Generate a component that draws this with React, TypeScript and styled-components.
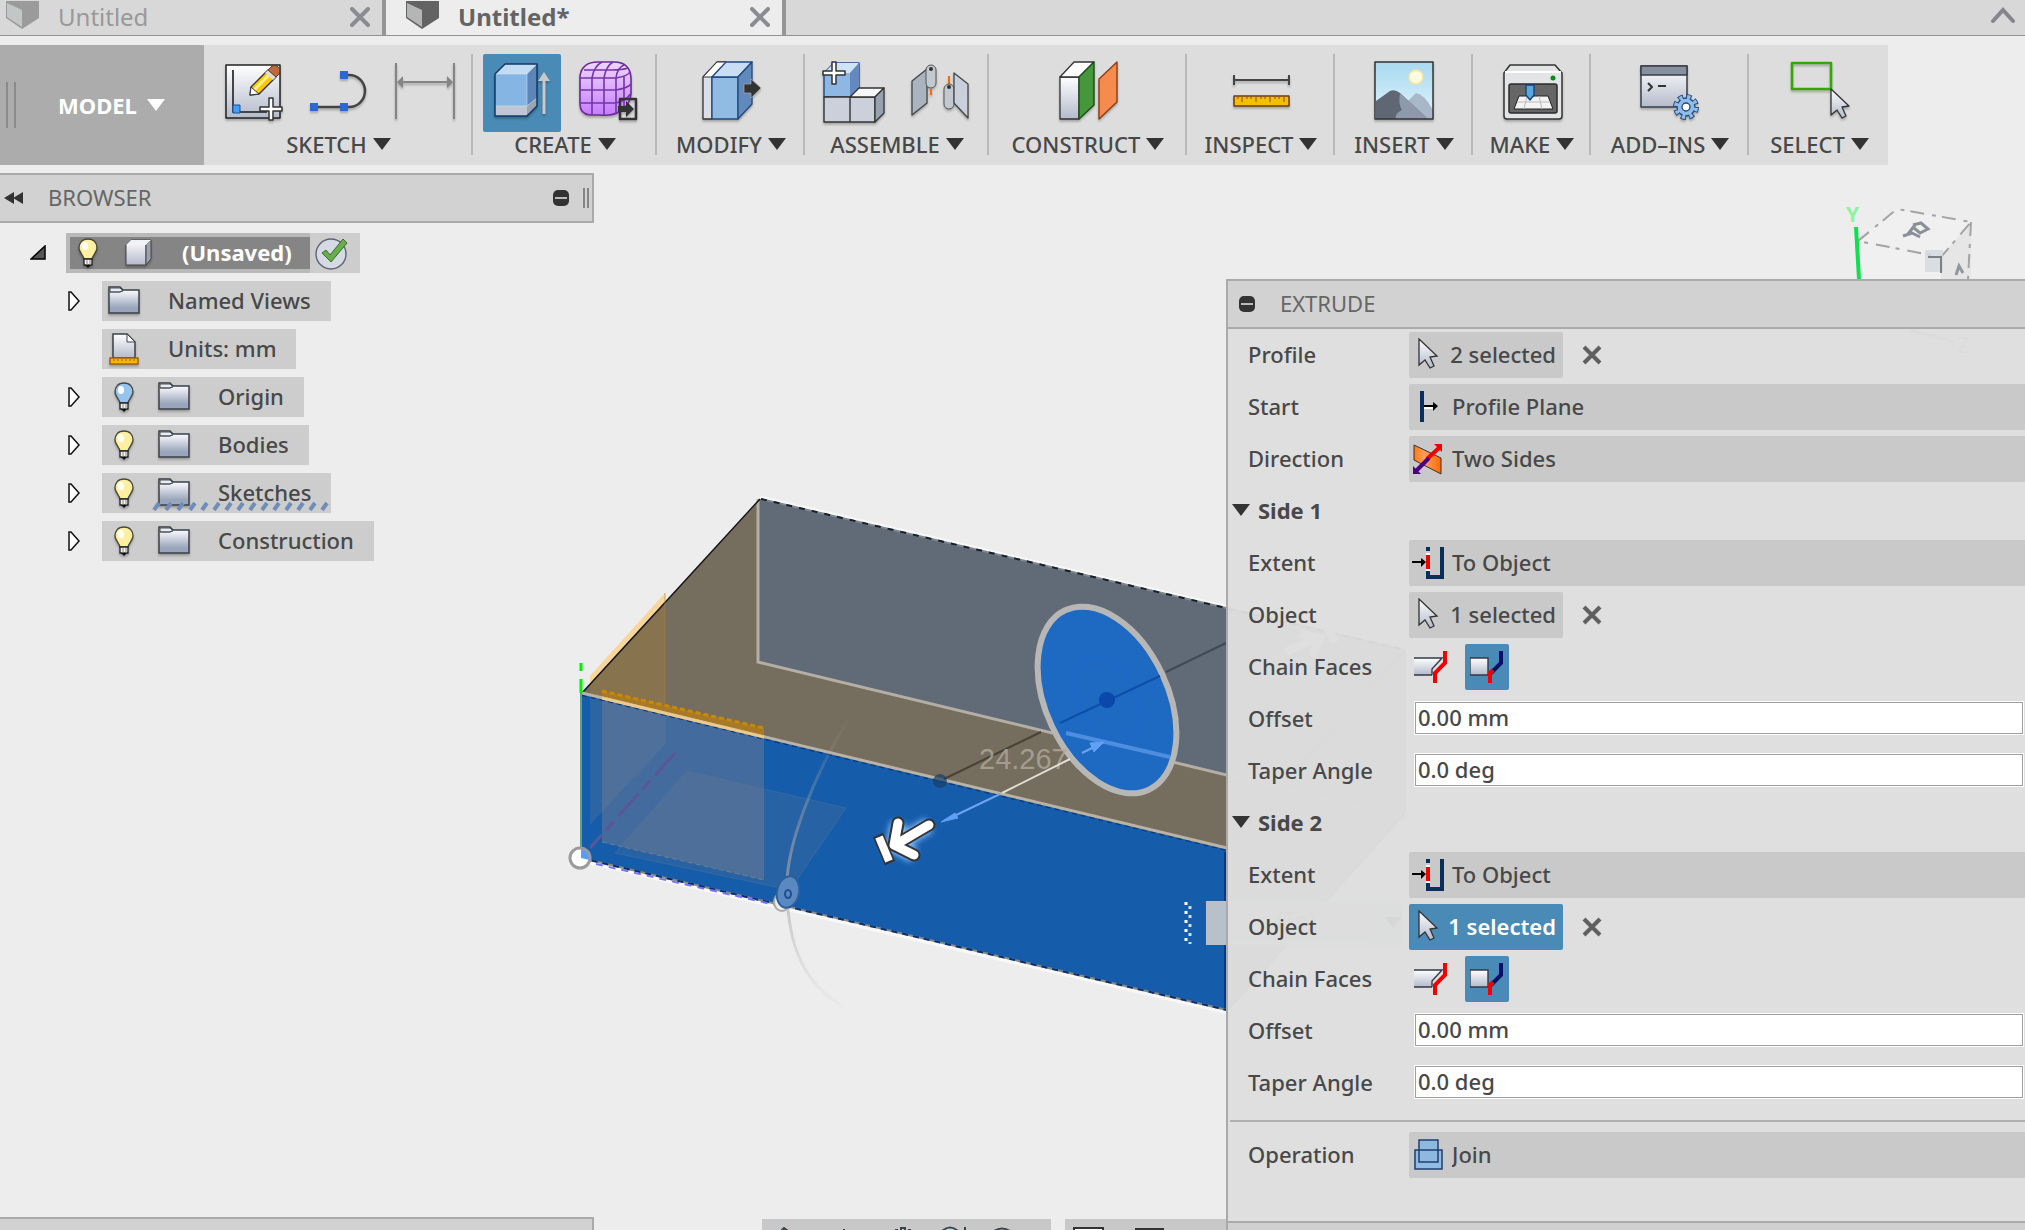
import React, { useState } from "react";
import styled, { createGlobalStyle, css } from "styled-components";

const Global = createGlobalStyle`
  * { box-sizing: border-box; }
  body { margin: 0; background: #ededed; overflow: hidden; }
  button, input, select { font: inherit; color: inherit; margin: 0; padding: 0; border: 0; background: none; border-radius: 0; outline: none; }
`;

const Page = styled.div`
  height: 100vh;
  display: flex;
  flex-direction: column;
  overflow: hidden;
  font-family: "Noto Sans", "Open Sans", sans-serif;
  font-size: 22px;
  font-weight: 500;
  line-height: 30px;
  color: #484848;
`;

/* ---------- document tabs ---------- */

const TabBar = styled.div`
  display: flex;
  height: 36px;
  flex: none;
  background: #d8d8d8;
  border-bottom: 1px solid #929292;
`;

const Tab = styled.div<{ $active?: boolean }>`
  display: flex;
  align-items: center;
  width: ${(p) => (p.$active ? 400 : 386)}px;
  padding: 0 12px 2px ${(p) => (p.$active ? 20 : 6)}px;
  border-right: 4px solid #959595;
  font-size: 24px;
  color: ${(p) => (p.$active ? "#646464" : "#999")};
  font-weight: ${(p) => (p.$active ? 700 : 400)};
  background: ${(p) => (p.$active ? "#ededed" : "transparent")};
`;

const TabName = styled.button`
  display: flex;
  align-items: center;
  flex: 1;
  gap: 18px;
  height: 32px;
  svg { align-self: flex-start; }
`;

const IconButton = styled.button`
  display: flex;
  align-items: center;
  justify-content: center;
`;

const CollapseTabs = styled(IconButton)`
  margin-left: auto;
  padding: 0 9px 4px 0;
`;

/* ---------- workspace ---------- */

const Workspace = styled.main`
  position: relative;
  flex: 1;
  min-height: 0;
  display: flex;
  flex-direction: column;
  gap: 8px;
  padding-top: 9px;
`;

const Canvas = styled.svg`
  position: absolute;
  left: 0;
  top: 0;
`;

const Toolbar = styled.div`
  position: relative;
  display: flex;
  align-self: flex-start;
  height: 120px;
  background: #dddddd;
`;

const ModelButton = styled.button`
  display: flex;
  align-items: center;
  width: 204px;
  padding-left: 6px;
  background: #acacac;
  color: #fff;
  font-weight: 700;
  gap: 10px;
`;

const Grip = styled.span`
  width: 10px;
  height: 46px;
  border: solid #8a8a8a;
  border-width: 0 2px;
  margin-right: 32px;
`;

const Group = styled.div<{ $width: number }>`
  display: flex;
  flex-direction: column;
  align-items: center;
  width: ${(p) => p.$width}px;
  margin: 9px 0 10px;
  padding-left: 2px;
  border-right: 2px solid #b9b9b9;
  &:last-child { border-right: 0; }
`;

const Tools = styled.div`
  display: flex;
  gap: 8px;
`;

const ToolButton = styled.button<{ $active?: boolean }>`
  width: 78px;
  height: 78px;
  border-radius: 2px;
  background: ${(p) => (p.$active ? "#4a8ab6" : "transparent")};
  svg { display: block; filter: drop-shadow(0 2px 1px rgba(0, 0, 0, 0.25)); }
`;

const GroupLabel = styled.button`
  display: flex;
  align-items: center;
  gap: 6px;
  height: 24px;
  line-height: 24px;
`;

const Caret = styled.span`
  border: solid transparent;
  border-width: 12px 9px 0;
  border-top-color: currentColor;
`;

const DarkCaret = styled(Caret)`
  border-top-color: #333;
`;

const Body = styled.div`
  position: relative;
  flex: 1;
  min-height: 0;
  display: flex;
`;

/* ---------- browser ---------- */

const BrowserColumn = styled.section`
  display: flex;
  flex-direction: column;
  width: 594px;
`;

const panelBar = css`
  display: flex;
  align-items: center;
  background: #d2d2d2;
  border: solid #aaaaaa;
  color: #666;
`;

const PanelTitle = styled.h2`
  flex: 1;
  margin: 0;
  padding-bottom: 2px;
  font-size: 22px;
  font-weight: 400;
`;

const BrowserHeader = styled.header`
  ${panelBar}
  height: 50px;
  border-width: 2px 2px 2px 0;
  padding: 0 3px 0 4px;
  gap: 25px;
`;

const BrowserEnd = styled.span`
  display: flex;
  align-items: center;
  gap: 14px;
`;

const Resizer = styled.span`
  width: 6px;
  height: 20px;
  border: solid #858585;
  border-width: 0 2px;
`;

const BrowserFooter = styled.footer`
  ${panelBar}
  height: 13px;
  margin-top: auto;
  border-width: 2px 2px 0 0;
`;

const Tree = styled.ul`
  list-style: none;
  margin: 0;
  padding: 10px 0 0;
  display: flex;
  flex-direction: column;
  gap: 8px;
`;

const TreeRow = styled.li<{ $level: number }>`
  display: flex;
  align-items: center;
  height: 40px;
  padding-left: ${(p) => (p.$level ? 66 : 30)}px;
`;

const Twisty = styled.button`
  width: 36px;
  height: 40px;
  display: flex;
  align-items: center;
`;

const NodeButton = styled.button`
  position: relative;
  display: flex;
  align-items: center;
  height: 40px;
  padding: 0 20px 0 4px;
  background: #cdcdcd;
`;

const RootButton = styled(NodeButton)`
  border: 4px solid #b9b9b9;
  border-right: 0;
  padding: 0 18px 0 0;
  background: #858585;
  color: #fff;
  font-weight: 700;
`;

const RootCheck = styled.span`
  display: flex;
  align-items: center;
  width: 50px;
  height: 40px;
  padding-left: 4px;
  background: #cdcdcd;
`;

const Glyph = styled.span<{ $width: number }>`
  display: flex;
  justify-content: center;
  width: ${(p) => p.$width}px;
  svg { filter: drop-shadow(0 2px 1px rgba(0, 0, 0, 0.25)); }
`;

const NodeName = styled.span<{ $near?: boolean }>`
  padding: 0 0 2px ${(p) => (p.$near ? 12 : 26)}px;
`;

const Hatch = styled.svg`
  position: absolute;
  left: 48px;
  bottom: 2px;
`;

/* ---------- bottom bars ---------- */

const BottomBars = styled.div`
  flex: 1;
  display: flex;
  align-items: flex-end;
  gap: 14px;
  padding-left: 168px;
`;

const BottomBar = styled.div<{ $width?: number }>`
  height: 11px;
  background: #c8c8c8;
  overflow: hidden;
  ${(p) => (p.$width ? `width: ${p.$width}px;` : "flex: 1;")}
  svg { display: block; }
`;

/* ---------- extrude dialog ---------- */

const Dialog = styled.section`
  display: flex;
  flex-direction: column;
  width: 799px;
  margin-top: 106px;
  border-left: 2px solid #aaaaaa;
  background: rgba(222, 222, 222, 0.955);
`;

const DialogHeader = styled.header`
  ${panelBar}
  height: 50px;
  border-width: 2px 0;
  padding-left: 11px;
  gap: 25px;
`;

const DialogFooter = styled.footer`
  height: 9px;
  margin-top: auto;
  background: #d0d0d0;
  border-top: 2px solid #aaaaaa;
`;

const Rows = styled.div`
  display: flex;
  flex-direction: column;
  gap: 6px;
  padding: 3px 0 14px;
`;

const Row = styled.div`
  display: flex;
  align-items: center;
  height: 46px;
  padding-left: 20px;
`;

const Label = styled.label`
  width: 161px;
  padding-bottom: 2px;
  flex: none;
`;

const SectionToggle = styled.button`
  display: flex;
  align-items: center;
  gap: 8px;
  height: 46px;
  padding: 0 0 2px 4px;
  font-weight: 700;
`;

const Chip = styled.button<{ $active?: boolean }>`
  display: flex;
  align-items: center;
  justify-content: space-between;
  width: 154px;
  height: 46px;
  padding: 0 7px 2px 9px;
  border-radius: 2px;
  background: ${(p) => (p.$active ? "#4a8ab6" : "#c9c9c9")};
  color: ${(p) => (p.$active ? "#fff" : "inherit")};
  font-weight: ${(p) => (p.$active ? 600 : 500)};
`;

const ClearButton = styled(IconButton)`
  width: 58px;
  height: 46px;
`;

const SelectBox = styled.div`
  display: flex;
  align-items: center;
  flex: 1;
  height: 46px;
  padding-left: 3px;
  gap: 8px;
  border-radius: 2px 0 0 2px;
  background: #c9c9c9;
`;

const Select = styled.select`
  flex: 1;
  height: 46px;
  padding-bottom: 2px;
  appearance: none;
`;

const Toggle = styled.button<{ $active?: boolean }>`
  display: flex;
  align-items: center;
  justify-content: center;
  width: 44px;
  height: 46px;
  margin-right: 12px;
  border-radius: 2px;
  background: ${(p) => (p.$active ? "#4a8ab6" : "transparent")};
`;

const NumberBox = styled.input`
  flex: 1;
  height: 32px;
  margin: 0 2px 2px 6px;
  padding: 0 2px 2px;
  background: #fff;
  border: 1px solid #a0a0a0;
  box-shadow: 0 0 0 1px #fff;
`;

const Divider = styled.hr`
  width: calc(100% - 2px);
  height: 2px;
  margin: 0 0 10px 2px;
  border: 0;
  background: #b0b0b0;
`;

/* ---------- small icons ---------- */

const CloseX = () => (
  <svg width="20" height="20" viewBox="0 0 20 20">
    <path d="M2 2 18 18M18 2 2 18" stroke="#8b8b93" strokeWidth="4" strokeLinecap="round" />
  </svg>
);

const TabCube = ({ dark }: { dark?: boolean }) => (
  <svg width="34" height="32" viewBox="6 0 34 32">
    <path d="M6 0H39V17L22 28 6 17Z" fill={dark ? "#636363" : "#9b9b9b"} />
    <path d="M7 2 22 9V26L7 16Z" fill={dark ? "#b4b6b6" : "#c3c6c6"} />
  </svg>
);

const MinusDot = () => (
  <svg width="16" height="16" viewBox="0 0 16 16">
    <rect width="16" height="16" rx="5" fill="#333" />
    <path d="M2 8H14" stroke="#bbb" strokeWidth="2" />
  </svg>
);

const Folder = () => (
  <svg width="32" height="30" viewBox="0 0 32 30">
    <path d="M1 27V1H12L15 4H31V27Z" fill="url(#steel)" stroke="#3c4048" strokeWidth="1.5" />
    <path d="M2 6H12L15 4M2 6V2H12L15 5 12 6Z" fill="#e8ebf2" stroke="#4c505a" />
  </svg>
);

const Bulb = ({ blue }: { blue?: boolean }) => (
  <svg width="20" height="30" viewBox="0 0 20 30">
    <path d="M10 1C4 1 1 5 1 10 1 14 5 17 6 21H14C15 17 19 14 19 10 19 5 16 1 10 1Z" fill={blue ? "#95c4ee" : "#fdf0a0"} stroke="#4a463c" strokeWidth="1.4" />
    <ellipse cx="7" cy="8" rx="3" ry="4" fill="#fff" />
    <path d="M6 21H14V27H6Z" fill="#f4f4f4" stroke="#222" strokeWidth="1.3" />
    <path d="M9 22V27M12 22V27" stroke="#888" />
    <path d="M7 27H13L10 30Z" fill="#111" />
  </svg>
);

const UnitsIcon = () => (
  <svg width="30" height="32" viewBox="0 0 30 32">
    <path d="M4 25V1H18L26 9V25Z" fill="url(#paper)" stroke="#3c4048" strokeWidth="1.5" />
    <path d="M18 1V9H26Z" fill="#fff" stroke="#3c4048" />
    <rect x="1" y="25" width="28" height="6" fill="#f5b800" stroke="#a05a10" strokeWidth="1.4" />
    <path d="M5 26v2M9 26v2M13 26v2M17 26v2M21 26v2M25 26v2" stroke="#a05a10" />
  </svg>
);

const BodyIcon = () => (
  <svg width="27" height="28" viewBox="0 0 27 28">
    <path d="M1 6 6 1H26L21 6V26H1Z" fill="url(#paper)" stroke="#444" />
    <path d="M21 6 26 1V20L21 26Z" fill="#9aa3ae" stroke="#444" />
    <path d="M1 6 6 1H26L21 6Z" fill="#f2f3f6" />
  </svg>
);

const CheckIcon = () => (
  <svg width="36" height="34" viewBox="0 0 36 34">
    <circle cx="17" cy="18" r="15" fill="#d5dae5" stroke="#5e6570" strokeWidth="1.4" />
    <path d="M8 17 12 14 16 19 29 3 33 7 17 26Z" fill="#68ae4c" stroke="#3c6b2c" />
  </svg>
);

const cursorPath = "M0 0V26L6 21 11 29 15 27 11 18 18 17Z";

const Cursor = () => (
  <svg width="24" height="32" viewBox="-1 -1 24 32">
    <path d={cursorPath} fill="url(#paper)" stroke="#333" strokeWidth="1.3" />
  </svg>
);

const ClearX = () => (
  <svg width="20" height="20" viewBox="0 0 20 20">
    <path d="M2 2 18 18M18 2 2 18" stroke="#606060" strokeWidth="4" />
  </svg>
);

const PlaneIcon = () => (
  <svg width="32" height="34" viewBox="0 0 32 34">
    <path d="M8 1H12V32H8Z" fill="#0a2f5f" />
    <path d="M12 18H24" stroke="#fff" strokeWidth="2" />
    <path d="M12 16H22" stroke="#000" strokeWidth="2" />
    <path d="M21 12 26 16 21 21Z" fill="#000" />
  </svg>
);

const TwoSidesIcon = () => (
  <svg width="32" height="34" viewBox="0 0 32 34">
    <path d="M2 3 29 16V32L2 18Z" fill="url(#orange)" stroke="#3a3030" />
    <path d="M15 17 28 5" stroke="#f20000" strokeWidth="4" />
    <path d="M22 2H30V10Z" fill="#f20000" />
    <path d="M17 16 4 29" stroke="#4b0082" strokeWidth="4" />
    <path d="M1 24V32H9Z" fill="#4b0082" />
  </svg>
);

const ToObjectIcon = () => (
  <svg width="32" height="34" viewBox="0 0 32 34">
    <path d="M14 1H18V5H14ZM14 25H18V29H28V1H32V33H14Z" fill="#0a2f5f" />
    <path d="M14 7H18V25H14Z" fill="#fff" />
    <path d="M14 9H18V23H14Z" fill="#f20000" />
    <path d="M0 16H10" stroke="#000" strokeWidth="2" />
    <path d="M9 12 14 16 9 21Z" fill="#000" />
  </svg>
);

const JoinIcon = () => (
  <svg width="32" height="34" viewBox="0 0 32 34">
    <rect x="3" y="12" width="27" height="19" fill="#92bce3" stroke="#1f3f72" strokeWidth="1.5" />
    <rect x="7" y="2" width="19" height="22" fill="#8db8e0" stroke="#1f3f72" strokeWidth="1.5" />
    <path d="M7 12H26" stroke="#1f3f72" strokeWidth="1.5" />
  </svg>
);

const ChainOn = () => (
  <svg width="34" height="34" viewBox="0 0 34 34">
    <path d="M0 8H28L18 19V25H0Z" fill="url(#paper)" />
    <path d="M0 8H28L18 19V25M0 25H18" fill="none" stroke="#333a48" strokeWidth="1.4" />
    <path d="M31 1V13L21 23V33" fill="none" stroke="#f20000" strokeWidth="4" />
  </svg>
);

const ChainOff = () => (
  <svg width="34" height="34" viewBox="0 0 34 34">
    <path d="M0 8H18V25H0Z" fill="url(#paper)" stroke="#333a48" strokeWidth="1.4" />
    <path d="M31 1V13L21 23" fill="none" stroke="#00106a" strokeWidth="4" />
    <path d="M20 33V23L23 20" fill="none" stroke="#f20000" strokeWidth="4" />
  </svg>
);

/* ---------- toolbar icons ---------- */

const ToolArt = ({ x, children }: { x: number; children: React.ReactNode }) => (
  <svg width="78" height="78" viewBox={`${x} 54 78 78`} strokeLinejoin="round">{children}</svg>
);

const Plus = ({ x, y }: { x: number; y: number }) => (
  <path transform={`translate(${x} ${y})`} d="M-2-11H2V-2H11V2H2V11H-2V2H-11V-2H-2Z" fill="#fff" stroke="#333" strokeWidth="1.5" />
);

const art = {
  sketch: (
    <ToolArt x={213}>
      <rect x="225" y="65" width="54" height="53" fill="url(#paper)" stroke="#222" strokeWidth="1.5" />
      <path d="M232 70V112H266" fill="none" stroke="#444" strokeWidth="2" />
      <rect x="232" y="105" width="7" height="8" fill="#3fa0ff" stroke="#1d4f96" />
      <path d="M250 87 267 70 275 77 258 94 249 95Z" fill="#ffc800" stroke="#333" strokeWidth="1.4" />
      <path d="M253 90 270 73" stroke="#fff08a" strokeWidth="3" />
      <path d="M250 87 249 95 258 94Z" fill="#fff" stroke="#333" />
      <path d="M264 73 267 70 275 77 272 80Z" fill="#ddd" />
      <path d="M267 70 271 66Q277 64 279 70L278 74 275 77Z" fill="#bd6b3d" stroke="#6e3414" />
      <Plus x={270} y={109} />
    </ToolArt>
  ),
  curve: (
    <ToolArt x={299}>
      <path d="M342 75H348A16 16 0 0 1 348 107H313" fill="none" stroke="#444" strokeWidth="2.5" />
      <path d="M339 71h8v8h-8zM339 103h8v8h-8zM309 103h8v8h-8z" fill="#2c68d4" />
    </ToolArt>
  ),
  dimension: (
    <ToolArt x={385}>
      <path d="M395 63V119M453 63V119M398 82H450" stroke="#858585" strokeWidth="2" />
      <path d="M396 82 402 76V88ZM452 82 446 76V88Z" fill="#858585" />
    </ToolArt>
  ),
  extrude: (
    <ToolArt x={483}>
      <path d="M495 74 505 64H537V106L527 116H495Z" fill="#85b5e2" />
      <path d="M495 74 505 64H537L527 74Z" fill="#c3dcf3" />
      <path d="M527 74 537 64V98L527 106Z" fill="#5c86b8" />
      <path d="M495 106H527V116H495Z" fill="#c0c6d4" />
      <path d="M527 106 537 98V106L527 116Z" fill="#98a4b2" />
      <path d="M495 106H527L537 98M495 74H527V106M527 74 537 64" fill="none" stroke="#dcebf8" strokeOpacity=".5" />
      <path d="M495 74 505 64H537V106L527 116H495Z" fill="none" stroke="#123a66" strokeWidth="1.5" />
      <path d="M544 114V80" stroke="#c8c8c8" strokeWidth="3" />
      <path d="M538 81 544 72 550 81Z" fill="#c8c8c8" />
    </ToolArt>
  ),
  form: (
    <ToolArt x={569}>
      <path d="M580 76Q582 62 598 62H614Q630 62 631 78V94Q630 106 619 112 612 116 600 115H590Q580 114 580 104Z" fill="url(#violet)" stroke="#6a2a9a" strokeWidth="1.6" />
      <path d="M580 78H616Q628 76 630 72M580 90H616Q628 88 631 84M580 103H616Q628 100 630 94M592 115V78Q594 66 602 62M604 115V78Q606 66 613 62M616 114V78Q617 68 624 65M584 70H612Q622 70 628 68M624 110V76" fill="none" stroke="#7434a8" strokeWidth="1.6" />
      <rect x="620" y="99" width="16" height="20" fill="none" stroke="#333" strokeWidth="2.5" />
      <path d="M618 106H626V101L634 109 626 117V112H618Z" fill="#333" />
    </ToolArt>
  ),
  press: (
    <ToolArt x={691}>
      <path d="M702 77 716 62H725L711 77V119H702Z" fill="#dcdfe6" stroke="#333" strokeWidth="1.3" />
      <path d="M702 77 716 62H725L711 77Z" fill="#fff" stroke="#333" />
      <path d="M711 77H737V119H711Z" fill="#92bbe3" stroke="#1f4a80" strokeWidth="1.3" />
      <path d="M711 77 725 62H751L737 77Z" fill="#c9def4" stroke="#1f4a80" strokeWidth="1.3" />
      <path d="M737 77 751 62V104L737 119Z" fill="#6289bb" stroke="#1f4a80" strokeWidth="1.3" />
      <path d="M743 84H750V79L760 88 750 98V93H743Z" fill="#333" stroke="#aaa" strokeWidth=".7" />
    </ToolArt>
  ),
  component: (
    <ToolArt x={815}>
      <path d="M824 73 834 63H859V88L850 97H824Z" fill="#8fb7e4" stroke="#1c4a86" strokeWidth="1.4" />
      <path d="M824 73 834 63H859L850 73Z" fill="#cfe2f6" />
      <path d="M850 73 859 63V88L850 97Z" fill="#6489c0" />
      <path d="M824 97H850V122H824ZM850 97H875V122H850Z" fill="#cbd0da" stroke="#333" strokeWidth="1.4" />
      <path d="M850 97 859 88H884L875 97Z" fill="#f6f7f9" stroke="#333" strokeWidth="1.3" />
      <path d="M875 97 884 88V113L875 122Z" fill="#96a2b0" stroke="#333" strokeWidth="1.3" />
      <Plus x={834} y={73} />
    </ToolArt>
  ),
  joint: (
    <ToolArt x={901}>
      <path d="M912 81 927 69V103L912 115Z" fill="#a9b4bf" stroke="#444" strokeWidth="1.3" />
      <rect x="926" y="65" width="10" height="23" rx="5" fill="#c2c9d1" stroke="#555" />
      <circle cx="931" cy="69" r="2" fill="#333" />
      <path d="M931 89V95M949 76V86" stroke="#ff6a00" strokeWidth="2" />
      <rect x="944" y="84" width="10" height="25" rx="5" fill="#c2c9d1" stroke="#555" />
      <circle cx="949" cy="87" r="2" fill="#333" />
      <path d="M954 73 968 84V118L954 103Z" fill="#c8d0dc" stroke="#444" strokeWidth="1.3" />
    </ToolArt>
  ),
  plane: (
    <ToolArt x={1049}>
      <path d="M1060 77H1079V119H1060Z" fill="url(#paper)" stroke="#333" strokeWidth="1.3" />
      <path d="M1060 77 1074 62H1094L1079 77Z" fill="#fff" stroke="#333" strokeWidth="1.3" />
      <path d="M1079 77 1094 62V105L1079 119Z" fill="#46963c" stroke="#174f17" strokeWidth="1.4" />
      <path d="M1099 79 1117 62V102L1099 119Z" fill="#f58b4c" stroke="#8c3c10" strokeWidth="1.4" />
    </ToolArt>
  ),
  measure: (
    <ToolArt x={1221}>
      <path d="M1233 75V85M1288 75V85M1233 80H1288" stroke="#444" strokeWidth="2" />
      <rect x="1233" y="96" width="55" height="10" fill="#f3bf00" stroke="#6e3c10" strokeWidth="1.5" />
      <path d="M1237 97v2M1241 97v5M1246 97v2M1250 97v2M1255 97v5M1260 97v2M1264 97v2M1269 97v5M1274 97v2M1278 97v2M1283 97v5" stroke="#7a4a10" />
    </ToolArt>
  ),
  image: (
    <ToolArt x={1365}>
      <rect x="1375" y="62" width="58" height="57" fill="url(#sky)" />
      <circle cx="1416" cy="77" r="7" fill="#fffbe0" stroke="#f7e39a" strokeWidth="1.5" />
      <path d="M1405 104 1416 93Q1424 94 1433 110V119H1405Z" fill="#a9b8c8" />
      <path d="M1376 101 1390 91Q1395 89 1400 93L1428 119H1376Z" fill="#5f6674" />
      <path d="M1400 93 1428 119H1396Q1394 114 1402 110 1398 104 1400 93Z" fill="#8e99ac" />
      <rect x="1375" y="62" width="58" height="57" fill="none" stroke="#333" strokeWidth="1.5" />
    </ToolArt>
  ),
  print: (
    <ToolArt x={1492}>
      <path d="M1503 73 1509 65H1554L1561 73V116Q1561 119 1558 119H1506Q1503 119 1503 116Z" fill="#e3e4e6" stroke="#333" strokeWidth="1.5" />
      <path d="M1504 72H1560" stroke="#fff" strokeWidth="2" />
      <circle cx="1552" cy="78" r="2.5" fill="#0a8a14" />
      <rect x="1508" y="84" width="48" height="29" rx="2" fill="#666" stroke="#2b2b2b" strokeWidth="1.5" />
      <path d="M1513 109 1518 96H1547L1552 109Z" fill="#f3f3f3" stroke="#222" />
      <path d="M1516 102H1549M1526 96 1523 109M1538 96 1541 109" stroke="#bbb" />
      <path d="M1525 85H1533V95L1529 100 1525 95Z" fill="#5aa8dc" stroke="#123f80" strokeWidth="1.3" />
    </ToolArt>
  ),
  scripts: (
    <ToolArt x={1631}>
      <rect x="1641" y="66" width="46" height="41" fill="url(#paper)" stroke="#3a3e48" strokeWidth="1.5" />
      <rect x="1641" y="66" width="46" height="9" fill="#87919e" stroke="#3a3e48" strokeWidth="1.5" />
      <path d="M1648 83 1652 87 1648 91M1658 86H1666" fill="none" stroke="#333" strokeWidth="2" />
      <circle cx="1686" cy="107" r="9.5" fill="none" stroke="#234a80" strokeWidth="7" strokeDasharray="4.6 2.86" />
      <circle cx="1686" cy="107" r="9" fill="#8fbdea" stroke="#234a80" strokeWidth="1.4" />
      <circle cx="1686" cy="107" r="9.5" fill="none" stroke="#8fbdea" strokeWidth="5" strokeDasharray="3 4.46" strokeDashoffset="-.8" />
      <circle cx="1686" cy="107" r="4" fill="#fff" stroke="#234a80" strokeWidth="1.4" />
    </ToolArt>
  ),
  select: (
    <ToolArt x={1779}>
      <rect x="1790" y="63" width="39" height="26" fill="none" stroke="#35a800" strokeWidth="2.5" />
      <path transform="translate(1829 89)" d={cursorPath} fill="url(#paper)" stroke="#333" strokeWidth="1.3" />
    </ToolArt>
  ),
};

const groups = [
  { name: "SKETCH", width: 269, tools: [["Create sketch", art.sketch], ["Line", art.curve], ["Sketch dimension", art.dimension]] },
  { name: "CREATE", width: 184, tools: [["Extrude", art.extrude], ["Create form", art.form]] },
  { name: "MODIFY", width: 148, tools: [["Press pull", art.press]] },
  { name: "ASSEMBLE", width: 184, tools: [["New component", art.component], ["Joint", art.joint]] },
  { name: "CONSTRUCT", width: 198, tools: [["Offset plane", art.plane]] },
  { name: "INSPECT", width: 148, tools: [["Measure", art.measure]] },
  { name: "INSERT", width: 138, tools: [["Attached canvas", art.image]] },
  { name: "MAKE", width: 118, tools: [["3D print", art.print]] },
  { name: "ADD–INS", width: 158, tools: [["Scripts and add-ins", art.scripts]] },
  { name: "SELECT", width: 139, tools: [["Select", art.select]] },
] as { name: string; width: number; tools: [string, React.ReactNode][] }[];

const nodes = [
  { name: "Named Views", folder: true, closed: true },
  { name: "Units: mm" },
  { name: "Origin", folder: true, closed: true, bulb: "off" },
  { name: "Bodies", folder: true, closed: true, bulb: "on" },
  { name: "Sketches", folder: true, closed: true, bulb: "on", hatch: true },
  { name: "Construction", folder: true, closed: true, bulb: "on" },
];

/* ---------- 3D viewport ---------- */

const Scene = () => (
  <Canvas width="2025" height="1194" viewBox="0 36 2025 1194" aria-hidden="true">
    <defs>
      <linearGradient id="paper" x2="0" y2="1"><stop stopColor="#fff" /><stop offset="1" stopColor="#b4bacb" /></linearGradient>
      <linearGradient id="steel" x2="0" y2="1"><stop offset=".2" stopColor="#f0f2f7" /><stop offset=".8" stopColor="#9aa5bb" /></linearGradient>
      <linearGradient id="violet" x2="0" y2="1"><stop stopColor="#eed8ff" /><stop offset="1" stopColor="#c77cff" /></linearGradient>
      <linearGradient id="sky" x2="0" y2="1"><stop stopColor="#a8d8f0" /><stop offset="1" stopColor="#e2f5fd" /></linearGradient>
      <linearGradient id="orange"><stop stopColor="#ff7a10" /><stop offset=".4" stopColor="#ffa060" /><stop offset="1" stopColor="#ff6a00" /></linearGradient>
      <linearGradient id="arc" x2="0" y2="1"><stop stopColor="#aaa" stopOpacity=".05" /><stop offset=".6" stopColor="#aaa" stopOpacity=".7" /><stop offset="1" stopColor="#ccc" stopOpacity=".1" /></linearGradient>
      <filter id="glow" x="-50%" y="-50%" width="200%" height="200%"><feGaussianBlur stdDeviation="3" /></filter>
      <clipPath id="frontFace"><path d="M582 693 1226 848V1010L581 858Z" /></clipPath>
    </defs>

    <path d="M665 593 590 676V690L665 610Z" fill="#f8d69c" />
    <path d="M760 497 1228 607M590 863 1228 1013" stroke="#f8f8f8" strokeWidth="3" />
    <path d="M1226 608 1405 650V813L1226 1010Z" fill="#8e9695" />
    <path d="M761 499 1227 608V849L582 693Z" fill="#756d5d" />
    <path d="M758 499 1227 609V776L758 662Z" fill="#616b77" />
    <path d="M665 605 590 685V694L665 712Z" fill="#87734d" />
    <path d="M582 693 1227 848V1010L581 858Z" fill="#155cab" />
    <path d="M758 499V662L1405 818" fill="none" stroke="#b5aea4" strokeWidth="3" />
    <path d="M582 693 760 499" stroke="#111" strokeWidth="1.5" />
    <path d="M761 499 1405 650" stroke="#7f868e" strokeWidth="2" />
    <path d="M761 499 1405 650" stroke="#16202c" strokeWidth="2" strokeDasharray="6 7" />

    <path d="M602 691 764 728V736L602 698Z" fill="#a87a25" />
    <path d="M602 691 764 728" stroke="#c88a06" strokeWidth="3" strokeDasharray="5 3" />
    <path d="M602 700 764 738V880L602 842Z" fill="#436b9e" />
    <path d="M590 697 665 715V743L590 825Z" fill="#6f8090" fillOpacity=".25" />
    <path d="M687 771 846 808 790 890 615 853Z" fill="#838383" fillOpacity=".17" stroke="#59789a" strokeOpacity=".4" />
    <path d="M665 712V743L636 777" fill="none" stroke="#5f7b96" strokeOpacity=".6" />
    <path d="M602 842 764 880" stroke="#6c7f90" strokeDasharray="5 3" />
    <path d="M675 753 590 848" stroke="#5b5599" strokeWidth="3" strokeDasharray="30 7 12 6" />
    <path d="M665 593V708" stroke="#a8813c" strokeOpacity=".6" />

    <path d="M582 695 1227 850" stroke="#0b3a78" strokeWidth="2" strokeDasharray="5 4" />
    <path d="M582 693 1227 848" stroke="#b9b2a5" strokeWidth="3" />
    <path d="M602 698 764 737" stroke="#ecc98c" strokeWidth="3" />
    <path d="M581 858 1227 1010" stroke="#8a8a80" strokeWidth="2" />
    <path d="M581 858 1227 1010" stroke="#052f74" strokeWidth="2" strokeDasharray="6 5" />
    <path d="M596 864 780 906" stroke="#7b74f2" strokeWidth="2" strokeDasharray="7 6" />
    <path d="M581 693V850" stroke="#5fa184" strokeWidth="2" />
    <path d="M581 663V671M581 679V693" stroke="#00f000" strokeWidth="3" />
    <path d="M1225 852V1008" stroke="#053a8a" strokeWidth="2" />

    <path d="M1405 650 1228 843M1405 650V813L1228 1010" fill="none" stroke="#7f8586" strokeWidth="2" />

    <g transform="translate(1107 700) rotate(65)">
      <ellipse rx="99" ry="61" fill="#1e69c1" stroke="#b7b7b6" strokeWidth="6" />
      <ellipse rx="46" ry="29" fill="none" stroke="#1c6ac8" strokeWidth="3" />
    </g>
    <path d="M1066 733 1170 757" stroke="#4d8ee0" strokeWidth="4" />
    <path d="M1226 643 1166 672" stroke="#3f4a57" strokeWidth="2" />
    <path d="M1160 676 1060 723" stroke="#0c4fa6" strokeWidth="2" />
    <circle cx="1107" cy="700" r="8" fill="#0a48ab" />
    <path d="M1041 732 944 779" stroke="#494133" strokeWidth="2" />
    <circle cx="940" cy="781" r="7" fill="#173f69" fillOpacity=".7" />

    <text x="979" y="769" fontFamily="Liberation Sans, Arial, sans-serif" fontSize="29" fontWeight="400" fill="#b1aa9e" fillOpacity=".8">24.267</text>
    <path d="M1070 759 1002 793" stroke="#e2ddd6" strokeWidth="2" />
    <path d="M1000 794 950 818M1100 744 1082 753" stroke="#6ba4f0" strokeWidth="2" />
    <path d="M941 822 955 813 958 818ZM1104 742 1090 743 1094 752Z" fill="#5fa0f6" stroke="#5fa0f6" />

    <path d="M848 720C812 778 785 850 787 890 788 950 806 985 844 1007" fill="none" stroke="url(#arc)" strokeWidth="3" />
    <ellipse cx="782" cy="902" rx="8" ry="9" fill="#eee" stroke="#aaa" strokeWidth="2" />
    <ellipse cx="788" cy="892" rx="11" ry="16" transform="rotate(12 788 892)" fill="#5a88c0" stroke="#2d5f9c" strokeWidth="2" />
    <ellipse cx="788" cy="894" rx="3" ry="4" fill="none" stroke="#1f4f8e" strokeWidth="2" />
    <circle cx="580" cy="858" r="10" fill="#fff" stroke="#9b9b9b" strokeWidth="3" />
    <circle cx="580" cy="858" r="9" fill="#5a9cf0" clipPath="url(#frontFace)" />

    <g fill="none" strokeLinejoin="round">
      <path d="M898 823 894 845 914 855M895 845 929 825" stroke="#8fc4ff" strokeWidth="15" filter="url(#glow)" />
      <path d="M898 823 894 845 914 855M895 845 929 825" stroke="#333" strokeWidth="13" strokeLinecap="round" />
      <path d="M878 835 890 863" stroke="#333" strokeWidth="11" />
      <path d="M879 837 889 861" stroke="#fff" strokeWidth="8" />
      <path d="M898 823 894 845 914 855M895 845 929 825" stroke="#fff" strokeWidth="9" strokeLinecap="round" />
    </g>

    <path d="M1186 902V946" stroke="#fff" strokeWidth="3" strokeDasharray="3 6" />
    <path d="M1190 906V944" stroke="#d0dff2" strokeWidth="3" strokeDasharray="3 6" />
    <rect x="1206" y="901" width="196" height="44" fill="#b8c0cb" />
    <rect x="1228" y="907" width="145" height="30" fill="#c4c9d0" stroke="#aaa" />
    <text x="1277" y="928" fontFamily="Open Sans, sans-serif" fontSize="22" fontWeight="400" fill="#888">(To)</text>
    <path d="M1384 917H1402L1393 928Z" fill="#555" />
    <path d="M1285 652 1318 638M1300 634 1320 638 1312 656M1325 624 1336 642" fill="none" stroke="#fff" strokeWidth="8" />

    <path d="M1858 241 1897 209 1971 222V290H1860Z" fill="#f1f1f1" fillOpacity=".7" />
    <path d="M1941 257 1971 222V290H1941Z" fill="#e6e6e6" />
    <path d="M1858 241 1897 209 1971 222 1941 257ZM1971 222 1968 279" fill="none" stroke="#a4a4a4" strokeWidth="2" strokeDasharray="14 8 4 6" />
    <path d="M1925 250H1943V272H1925Z" fill="#d5d8dd" fillOpacity=".8" />
    <path d="M1928 257H1941V273" fill="none" stroke="#808080" strokeWidth="2" />
    <path d="M1903 236 1912 233 1920 237M1908 234 1915 225M1913 225 1921 223 1928 229 1920 233 1914 228" fill="none" stroke="#8b9098" strokeWidth="3" />
    <path d="M1956 275 1959 266 1963 273" fill="none" stroke="#93979d" strokeWidth="3" />
    <path d="M1856 227 1859 279" stroke="#0fe050" strokeWidth="4" />
    <text x="1846" y="222" fontFamily="Open Sans, sans-serif" fontSize="21" fontWeight="700" fill="#8af59c">Y</text>
    <text x="1957" y="353" fontFamily="Open Sans, sans-serif" fontSize="22" fontWeight="400" fill="#b5b5d8">Z</text>
    <path d="M1910 330 1955 342" stroke="#b5b5d8" strokeWidth="3" />
  </Canvas>
);

/* ---------- extrude dialog parts ---------- */

const Side = ({ n, picking }: { n: number; picking?: boolean }) => {
  const [chain, setChain] = useState(false);
  return (
    <>
      <SectionToggle><DarkCaret />Side {n}</SectionToggle>
      <Row>
        <Label htmlFor={`extent${n}`}>Extent</Label>
        <SelectBox><ToObjectIcon /><Select id={`extent${n}`}><option>To Object</option></Select></SelectBox>
      </Row>
      <Row>
        <Label htmlFor={`object${n}`}>Object</Label>
        <Chip id={`object${n}`} $active={picking}><Cursor />1 selected</Chip>
        <ClearButton aria-label="Clear object"><ClearX /></ClearButton>
      </Row>
      <Row>
        <Label as="span">Chain Faces</Label>
        <Toggle aria-label="Chained faces" $active={chain} onClick={() => setChain(true)}><ChainOn /></Toggle>
        <Toggle aria-label="Single face" $active={!chain} onClick={() => setChain(false)}><ChainOff /></Toggle>
      </Row>
      <Row>
        <Label htmlFor={`offset${n}`}>Offset</Label>
        <NumberBox id={`offset${n}`} defaultValue="0.00 mm" />
      </Row>
      <Row>
        <Label htmlFor={`taper${n}`}>Taper Angle</Label>
        <NumberBox id={`taper${n}`} defaultValue="0.0 deg" />
      </Row>
    </>
  );
};

export default function App() {
  return (
    <Page>
      <Global />
      <TabBar>
        <Tab>
          <TabName><TabCube />Untitled</TabName>
          <IconButton aria-label="Close tab"><CloseX /></IconButton>
        </Tab>
        <Tab $active>
          <TabName><TabCube dark />Untitled*</TabName>
          <IconButton aria-label="Close tab"><CloseX /></IconButton>
        </Tab>
        <CollapseTabs aria-label="Collapse">
          <svg width="26" height="18" viewBox="0 0 26 18"><path d="M3 14 13 3 23 14" fill="none" stroke="#85858d" strokeWidth="4" strokeLinecap="round" /></svg>
        </CollapseTabs>
      </TabBar>

      <Workspace>
        <Scene />
        <Toolbar>
          <ModelButton><Grip />MODEL<Caret /></ModelButton>
          {groups.map((g) => (
            <Group key={g.name} $width={g.width}>
              <Tools>
                {g.tools.map(([name, icon]) => (
                  <ToolButton key={name} aria-label={name} $active={name === "Extrude"}>{icon}</ToolButton>
                ))}
              </Tools>
              <GroupLabel>{g.name}<DarkCaret /></GroupLabel>
            </Group>
          ))}
        </Toolbar>

        <Body>
          <BrowserColumn>
            <BrowserHeader>
              <IconButton aria-label="Collapse browser">
                <svg width="19" height="12" viewBox="0 0 19 12"><path d="M0 6 10 0V12ZM9 6 19 0V12Z" fill="#333" /></svg>
              </IconButton>
              <PanelTitle>BROWSER</PanelTitle>
              <BrowserEnd><MinusDot /><Resizer /></BrowserEnd>
            </BrowserHeader>
            <Tree>
              <TreeRow $level={0}>
                <Twisty aria-label="Collapse">
                  <svg width="16" height="16" viewBox="0 0 16 16"><path d="M1 14 15 1V14Z" fill="#555" stroke="#000" strokeWidth="1.5" /></svg>
                </Twisty>
                <RootButton>
                  <Glyph $width={36}><Bulb /></Glyph>
                  <Glyph $width={64}><BodyIcon /></Glyph>
                  <NodeName $near>(Unsaved)</NodeName>
                </RootButton>
                <RootCheck><CheckIcon /></RootCheck>
              </TreeRow>
              {nodes.map((n) => (
                <TreeRow key={n.name} $level={1}>
                  <Twisty aria-label={`Expand ${n.name}`} disabled={!n.closed}>
                    {n.closed && (
                      <svg width="16" height="20" viewBox="0 0 16 20"><path d="M3 1V19H5L13 10 5 1Z" fill="#fff" stroke="#111" strokeWidth="1.5" /></svg>
                    )}
                  </Twisty>
                  <NodeButton>
                    {n.bulb && <Glyph $width={36}><Bulb blue={n.bulb === "off"} /></Glyph>}
                    <Glyph $width={n.bulb ? 64 : 36}>{n.folder ? <Folder /> : <UnitsIcon />}</Glyph>
                    <NodeName $near={!!n.bulb}>{n.name}</NodeName>
                    {n.hatch && (
                      <Hatch width="180" height="10" viewBox="0 0 180 10">
                        <path d={Array.from({ length: 15 }, (_, i) => `M${4 + i * 12} 9l5-7`).join("")} stroke="#6f8db8" strokeWidth="4" />
                      </Hatch>
                    )}
                  </NodeButton>
                </TreeRow>
              ))}
            </Tree>
            <BrowserFooter />
          </BrowserColumn>

          <BottomBars>
            <BottomBar $width={289}>
              <svg width="289" height="11" viewBox="0 0 289 11" fill="none" stroke="#3a4450" strokeWidth="2">
                <path d="M19 12 22 9 26 12M82 11V10M133 11h3M139 12V9h4V12M146 11h3M203 11V8" />
                <path d="M180 12Q188 5 196 12M232 12Q240 7 248 12" fill="#b8dce0" />
              </svg>
            </BottomBar>
            <BottomBar>
              <svg width="161" height="11" viewBox="0 0 161 11" fill="#fff" stroke="#333" strokeWidth="2">
                <path d="M9 12V9H38V12M71 12V10H98V12" />
              </svg>
            </BottomBar>
          </BottomBars>

          <Dialog>
            <DialogHeader><MinusDot /><PanelTitle>EXTRUDE</PanelTitle></DialogHeader>
            <Rows>
              <Row>
                <Label htmlFor="profile">Profile</Label>
                <Chip id="profile"><Cursor />2 selected</Chip>
                <ClearButton aria-label="Clear profile"><ClearX /></ClearButton>
              </Row>
              <Row>
                <Label htmlFor="start">Start</Label>
                <SelectBox><PlaneIcon /><Select id="start"><option>Profile Plane</option></Select></SelectBox>
              </Row>
              <Row>
                <Label htmlFor="direction">Direction</Label>
                <SelectBox><TwoSidesIcon /><Select id="direction"><option>Two Sides</option></Select></SelectBox>
              </Row>
              <Side n={1} />
              <Side n={2} picking />
            </Rows>
            <Divider />
            <Row>
              <Label htmlFor="operation">Operation</Label>
              <SelectBox><JoinIcon /><Select id="operation"><option>Join</option></Select></SelectBox>
            </Row>
            <DialogFooter />
          </Dialog>
        </Body>
      </Workspace>
    </Page>
  );
}
